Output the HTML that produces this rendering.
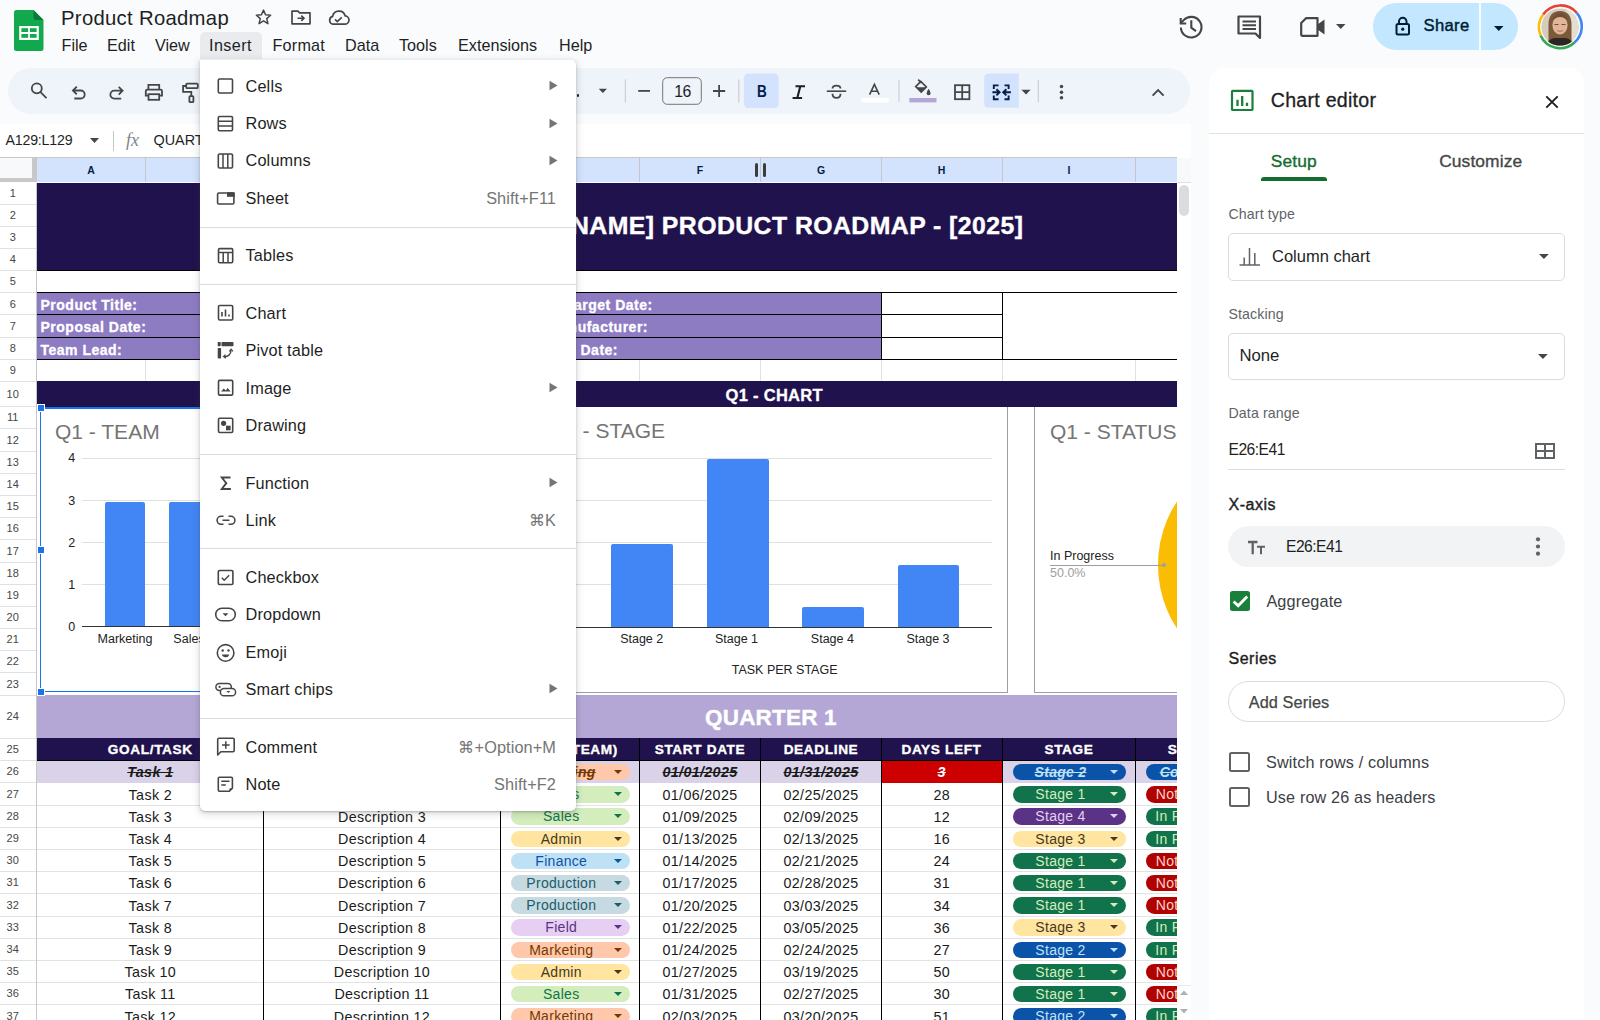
<!DOCTYPE html>
<html><head><meta charset="utf-8">
<style>
*{box-sizing:border-box}
html,body{margin:0;padding:0}
body{width:1600px;height:1020px;overflow:hidden;background:#f9fbfd;position:relative;font-family:"Liberation Sans",sans-serif;color:#1f1f1f}
.a{position:absolute}
.t{position:absolute;white-space:nowrap;line-height:1}
svg{position:absolute;overflow:visible}
/* grid */
.rh{position:absolute;left:0;width:37px;text-align:center;font-size:12px;color:#444746;background:#fff;border-bottom:1px solid #e1e1e1}
.rhn{position:absolute;left:0;width:37px;text-align:center;}
.hl{position:absolute;height:1px;background:#e2e2e2}
.vl{position:absolute;width:1px;background:#e2e2e2}
.mono{font-family:"Liberation Sans",sans-serif}
.chip{position:absolute;height:16.5px;border-radius:8.5px;font-size:14px;line-height:17px;letter-spacing:0.3px;text-align:center}
.chip i{position:absolute;right:8px;top:6px;width:0;height:0;border-left:4.2px solid transparent;border-right:4.2px solid transparent;border-top:4.5px solid currentColor}
.chip span{position:absolute;left:0;right:18px;top:0;text-align:center}
.cell{position:absolute;text-align:center;font-size:14px;letter-spacing:0.3px;color:#1a1a1a;line-height:22px}
.menu .it{position:absolute;left:245px;font-size:16.3px;color:#1f1f1f;line-height:1}
.menu .sc{position:absolute;right:23px;font-size:16px;color:#757575;line-height:1}
.menu .ar{position:absolute;left:547px;width:0;height:0;border-top:5px solid transparent;border-bottom:5px solid transparent;border-left:9px solid #5f6368}
.menu .sep{position:absolute;left:200px;width:377px;height:1px;background:#dadce0}
.menu svg{stroke:#444746;fill:none;stroke-width:1.6}
</style></head>
<body>

<!-- ============ HEADER ============ -->
<svg style="left:14px;top:10px" width="30" height="41" viewBox="0 0 30 41">
  <path d="M2 0H19.5L29.5 10V38.5Q29.5 41 27 41H2.5Q0 41 0 38.5V2.5Q0 0 2 0Z" fill="#11a84e"/>
  <path d="M19.5 0V8Q19.5 10 21.5 10H29.5Z" fill="#0a7a3a"/>
  <rect x="5.2" y="16" width="19.6" height="14" fill="#fff"/>
  <rect x="7.4" y="18.2" width="6.7" height="3.8" fill="#11a84e"/>
  <rect x="15.9" y="18.2" width="6.7" height="3.8" fill="#11a84e"/>
  <rect x="7.4" y="24" width="6.7" height="3.8" fill="#11a84e"/>
  <rect x="15.9" y="24" width="6.7" height="3.8" fill="#11a84e"/>
</svg>
<div class="t" style="left:61px;top:8px;font-size:20.3px;color:#1f1f1f;letter-spacing:0.3px">Product Roadmap</div>
<!-- star -->
<svg style="left:254px;top:8px" width="19" height="18" viewBox="0 0 24 24"><path d="M12 2.8l2.7 6.3 6.8.6-5.2 4.5 1.6 6.7L12 17.3l-5.9 3.6 1.6-6.7-5.2-4.5 6.8-.6z" fill="none" stroke="#444746" stroke-width="2" stroke-linejoin="round"/></svg>
<!-- folder move -->
<svg style="left:291px;top:10px" width="20" height="15" viewBox="0 0 20 15"><path d="M1 1.2h6l1.6 1.6H19v11H1z" fill="none" stroke="#444746" stroke-width="1.7" stroke-linejoin="round"/><path d="M6.5 8.2h6.5M10.3 5.6l2.7 2.6-2.7 2.6" fill="none" stroke="#444746" stroke-width="1.6"/></svg>
<!-- cloud done -->
<svg style="left:327px;top:11px" width="23" height="14" viewBox="0 0 23 14"><path d="M6 13.2H17.5a4.2 4.2 0 0 0 .6-8.4A6.4 6.4 0 0 0 5.6 5.4 4 4 0 0 0 6 13.2z" fill="none" stroke="#444746" stroke-width="1.7"/><path d="M8 8.4l2.3 2.2 4.4-4.2" fill="none" stroke="#444746" stroke-width="1.6"/></svg>

<!-- menu bar -->
<div class="a" style="left:200px;top:31.7px;width:62px;height:27px;background:#e9ebee;border-radius:5px 5px 0 0"></div>
<div class="t" style="left:61.5px;top:37px;font-size:16.2px;color:#1f1f1f">File</div>
<div class="t" style="left:107px;top:37px;font-size:16.2px;color:#1f1f1f">Edit</div>
<div class="t" style="left:155px;top:37px;font-size:16.2px;color:#1f1f1f">View</div>
<div class="t" style="left:209px;top:37px;font-size:16.2px;color:#1f1f1f;letter-spacing:0.4px">Insert</div>
<div class="t" style="left:272.5px;top:37px;font-size:16.2px;color:#1f1f1f;letter-spacing:0.2px">Format</div>
<div class="t" style="left:345px;top:37px;font-size:16.2px;color:#1f1f1f">Data</div>
<div class="t" style="left:399px;top:37px;font-size:16.2px;color:#1f1f1f">Tools</div>
<div class="t" style="left:458px;top:37px;font-size:16.2px;color:#1f1f1f">Extensions</div>
<div class="t" style="left:559px;top:37px;font-size:16.2px;color:#1f1f1f">Help</div>

<!-- right header icons -->
<svg style="left:1174px;top:10px" width="34" height="34" viewBox="0 0 34 34"><path d="M6.9 17.4A10.3 10.3 0 1 0 9.7 10.1L7.2 12.8" fill="none" stroke="#444746" stroke-width="2.1"/><path d="M6.7 8.1V13.5H12.2" fill="none" stroke="#444746" stroke-width="2.1"/><path d="M17.3 10.2V17.6L22 21.1" fill="none" stroke="#444746" stroke-width="2.1"/></svg>
<svg style="left:1237px;top:15px" width="25" height="25" viewBox="0 0 25 25"><path d="M1.5 1.5h21.5v21.5l-4.5-4.5H1.5z" fill="none" stroke="#444746" stroke-width="2.2" stroke-linejoin="round"/><path d="M5.5 6.5h13.5M5.5 10.3h13.5M5.5 14h13.5" stroke="#444746" stroke-width="2"/></svg>
<svg style="left:1300px;top:17px" width="26" height="20" viewBox="0 0 26 20"><path d="M6 1.2H17.5V18.8H2.5Q1.2 18.8 1.2 17.5V6z" fill="none" stroke="#444746" stroke-width="2.2" stroke-linejoin="round"/><path d="M17.5 7.5L24.5 2.5V17.5L17.5 12.5z" fill="#444746"/></svg>
<svg style="left:1336px;top:24px" width="10" height="6" viewBox="0 0 10 6"><path d="M0 0h9.5L4.75 5z" fill="#444746"/></svg>
<!-- share -->
<div class="a" style="left:1372.5px;top:3px;width:145.5px;height:47px;border-radius:24px;background:#c2e7ff"></div>
<div class="a" style="left:1478.5px;top:3px;width:2px;height:47px;background:#f9fbfd"></div>
<svg style="left:1395px;top:16px" width="16" height="20" viewBox="0 0 16 20"><rect x="1.5" y="8" width="12.5" height="10.5" rx="1.5" fill="none" stroke="#001d35" stroke-width="2"/><path d="M4 8V5.5a3.75 3.75 0 0 1 7.5 0V8" fill="none" stroke="#001d35" stroke-width="2"/><circle cx="7.75" cy="13.2" r="1.6" fill="#001d35"/></svg>
<div class="t" style="left:1423.5px;top:18.3px;font-size:16.6px;color:#001d35;-webkit-text-stroke:0.45px #001d35;letter-spacing:0.35px">Share</div>
<svg style="left:1493.5px;top:25.5px" width="10" height="6" viewBox="0 0 10 6"><path d="M0 0h9.5L4.75 5z" fill="#001d35"/></svg>
<!-- avatar -->
<svg style="left:1536px;top:3px" width="48" height="48" viewBox="0 0 48 48">
  <path d="M7.2 11.5A21.3 21.3 0 0 1 40.8 9.8" fill="none" stroke="#ea4335" stroke-width="2.6"/>
  <path d="M40.8 9.8A21.3 21.3 0 0 1 38.5 39.5" fill="none" stroke="#4285f4" stroke-width="2.6"/>
  <path d="M38.5 39.5A21.3 21.3 0 0 1 4.6 32.5" fill="none" stroke="#34a853" stroke-width="2.6"/>
  <path d="M4.6 32.5A21.3 21.3 0 0 1 7.2 11.5" fill="none" stroke="#fbbc04" stroke-width="2.6"/>
  <clipPath id="avc"><circle cx="24" cy="24" r="18.6"/></clipPath>
  <g clip-path="url(#avc)">
   <rect x="0" y="0" width="48" height="48" fill="#d6cbbd"/>
   <rect x="30" y="0" width="18" height="48" fill="#e4ddd2"/>
   <path d="M12.5 44V22Q12.5 8 24 8Q35.5 8 35.5 22V44z" fill="#7b5a3a"/>
   <path d="M8 48Q10 37 18 35H30Q38 37 40 48z" fill="#2b2624"/>
   <ellipse cx="24" cy="22" rx="7.6" ry="9.5" fill="#e2b49a"/>
   <path d="M16.5 18Q18 10 24 10Q30 10 31.5 18Q28 14 24 14Q20 14 16.5 18z" fill="#6e4f33"/>
   <path d="M18.5 21.5h4M25.5 21.5h4" stroke="#5a4536" stroke-width="0.9"/>
   <path d="M21 27.5Q24 29.5 27 27.5" fill="none" stroke="#b06a5a" stroke-width="0.9"/>
  </g>
</svg>

<!-- ============ TOOLBAR ============ -->
<div class="a" style="left:8px;top:68px;width:1182px;height:46px;border-radius:23px;background:#eff3fa"></div>
<svg style="left:0;top:0" width="1600" height="130" viewBox="0 0 1600 130">
<g fill="none" stroke="#444746" stroke-width="1.8">
<circle cx="36.8" cy="88.3" r="5"/><path d="M40.5 92.2L46.5 98.2"/>
<path d="M73.5 90.5H80.7a4 4 0 0 1 0 8H74.3M76.8 86.6L72.9 90.5 76.8 94.4"/>
<path d="M122 90.7H114.3a3.95 3.95 0 0 0 0 7.9H121.2M118.7 86.8L122.6 90.7 118.7 94.6"/>
<path d="M148.4 89.2V84.9H159.2V89.2M148.4 95.6H145.8V91.2Q145.8 89.7 147.3 89.7H160.5Q162 89.7 162 91.2V95.6H159.3"/>
<rect x="148.5" y="94.2" width="10.7" height="5.6"/>
<rect x="186.2" y="83.6" width="11.6" height="4.6" rx="1"/>
<path d="M186 86H183.1V91.8H191.3V96.3"/><rect x="189.4" y="96.2" width="4" height="6" rx="0.8"/>
</g>
<path d="M598.7 88.7H607L602.85 93z" fill="#444746"/>
<rect x="624.8" y="79.4" width="1" height="23.2" fill="#c7c7c7"/>
<path d="M638.2 90.9H650" stroke="#444746" stroke-width="1.8"/>
<rect x="662.7" y="77.7" width="38.6" height="26.6" rx="4.5" fill="none" stroke="#747775" stroke-width="1"/>
<path d="M713 91H725.2M719.1 85V97" stroke="#444746" stroke-width="1.8"/>
<rect x="738.3" y="79.4" width="1" height="23.2" fill="#c7c7c7"/>
<rect x="743.9" y="73.6" width="34.9" height="34.5" rx="4.5" fill="#d3e3fd"/>
<path d="M795.5 86.2H805M792.6 98H802.1M800.3 86.2L797.3 98" stroke="#1f1f1f" stroke-width="2.1" fill="none"/>
<path d="M826.8 91.2H846.2" stroke="#444746" stroke-width="1.6"/>
<path d="M840.5 88.6Q840.5 85.6 836.5 85.6Q832.5 85.6 832.5 88.6M832.5 93.8Q832.5 97.9 836.5 97.9Q840.5 97.9 840.5 93.8" fill="none" stroke="#444746" stroke-width="1.8"/>
<path d="M869.6 94.6L874.4 84.3L879.2 94.6M871.2 91.2H877.6" fill="none" stroke="#444746" stroke-width="1.6"/>
<rect x="861.6" y="98" width="27.1" height="4.4" fill="#ffffff"/>
<rect x="898.5" y="80" width="1" height="22" fill="#c7c7c7"/>
<path d="M915.7 86.6L920.8 81.5L926.3 87L921.2 92.1z" fill="none" stroke="#444746" stroke-width="1.7"/>
<path d="M916 87.2H926.1L921.2 92.1z" fill="#444746"/>
<path d="M918.2 79.6L921.5 82.9" stroke="#444746" stroke-width="1.7"/>
<path d="M928.6 88.8Q926.4 92 926.6 93.2A2 2 0 0 0 930.6 93.2Q930.8 92 928.6 88.8z" fill="#444746"/>
<rect x="909.3" y="98" width="27.2" height="4.4" fill="#b4a7d6"/>
<rect x="955" y="85.2" width="14.4" height="14" fill="none" stroke="#444746" stroke-width="1.8"/>
<path d="M962.2 85.2V99.2M955 92.2H969.4" stroke="#444746" stroke-width="1.8"/>
<path d="M988.6 73.4H1018.9V107.8H988.6Q984.1 107.8 984.1 103.3V77.9Q984.1 73.4 988.6 73.4z" fill="#d3e3fd"/>
<g fill="none" stroke="#041e49" stroke-width="1.9">
<path d="M998.6 85.4H993.8V89M993.8 95.4V99.3H998.6M1004.5 85.4H1008.6V89M1008.6 95.4V99.3H1004.5"/>
<path d="M992.4 92.3H999.5M996.4 89.2L999.6 92.3 996.4 95.4M1010.9 92.3H1003.2M1006.4 89.2L1003.2 92.3 1006.4 95.4"/>
</g>
<path d="M1021.4 89.8H1030.6L1026 94.5z" fill="#444746"/>
<rect x="1037.8" y="79.7" width="1" height="22.5" fill="#c7c7c7"/>
<circle cx="1061.5" cy="86.6" r="1.75" fill="#444746"/><circle cx="1061.5" cy="92.2" r="1.75" fill="#444746"/><circle cx="1061.5" cy="97.8" r="1.75" fill="#444746"/>
<path d="M1152.6 95.6L1158.1 90 1163.6 95.6" fill="none" stroke="#444746" stroke-width="1.8"/>
</svg>
<div class="t" style="left:674.3px;top:83.6px;font-size:15.8px;color:#1f1f1f;letter-spacing:-0.6px">16</div>
<div class="t" style="left:756.6px;top:82.5px;font-size:17.4px;color:#041e49;font-weight:bold;transform:scaleX(0.78);transform-origin:0 0">B</div>
<div class="a" style="left:576.5px;top:94px;width:2.6px;height:2.6px;border-radius:50%;background:#1f1f1f"></div>

<!-- ============ FORMULA BAR ============ -->
<div class="a" style="left:0;top:124px;width:1190.5px;height:33.5px;background:#fff"></div>
<div class="t" style="left:5.5px;top:132.8px;font-size:14.2px;color:#1f1f1f;letter-spacing:-0.2px">A129:L129</div>
<svg style="left:89.5px;top:137.5px" width="10" height="6" viewBox="0 0 10 6"><path d="M0 0h9L4.5 5z" fill="#444746"/></svg>
<div class="a" style="left:113px;top:131px;width:1px;height:19.5px;background:#c7c7c7"></div>
<div class="t" style="left:126px;top:131px;font-size:18px;color:#80868b;font-family:'Liberation Serif',serif;font-style:italic">fx</div>
<div class="t" style="left:153.5px;top:132.5px;font-size:14.4px;color:#1f1f1f">QUART</div>

<div class="a" style="left:0;top:0;width:1177px;height:1020px;overflow:hidden">
<div class="a" style="left:37px;top:182.5px;width:1140px;height:840px;background:#fff"></div>
<div class="a" style="left:0;top:182.5px;width:37px;height:840px;background:#fff"></div>
<div class="a" style="left:0;top:204px;width:37px;height:1px;background:#dfe1e3"></div>
<div class="t" style="left:0;width:25.4px;text-align:center;top:188.14px;font-size:11px;color:#444746">1</div>
<div class="a" style="left:0;top:226px;width:37px;height:1px;background:#dfe1e3"></div>
<div class="t" style="left:0;width:25.4px;text-align:center;top:210.22px;font-size:11px;color:#444746">2</div>
<div class="a" style="left:0;top:248px;width:37px;height:1px;background:#dfe1e3"></div>
<div class="t" style="left:0;width:25.4px;text-align:center;top:232.3px;font-size:11px;color:#444746">3</div>
<div class="a" style="left:0;top:270px;width:37px;height:1px;background:#dfe1e3"></div>
<div class="t" style="left:0;width:25.4px;text-align:center;top:254.38px;font-size:11px;color:#444746">4</div>
<div class="a" style="left:0;top:292px;width:37px;height:1px;background:#dfe1e3"></div>
<div class="t" style="left:0;width:25.4px;text-align:center;top:276.46px;font-size:11px;color:#444746">5</div>
<div class="a" style="left:0;top:314px;width:37px;height:1px;background:#dfe1e3"></div>
<div class="t" style="left:0;width:25.4px;text-align:center;top:298.54px;font-size:11px;color:#444746">6</div>
<div class="a" style="left:0;top:337px;width:37px;height:1px;background:#dfe1e3"></div>
<div class="t" style="left:0;width:25.4px;text-align:center;top:320.62px;font-size:11px;color:#444746">7</div>
<div class="a" style="left:0;top:359px;width:37px;height:1px;background:#dfe1e3"></div>
<div class="t" style="left:0;width:25.4px;text-align:center;top:342.7px;font-size:11px;color:#444746">8</div>
<div class="a" style="left:0;top:381px;width:37px;height:1px;background:#dfe1e3"></div>
<div class="t" style="left:0;width:25.4px;text-align:center;top:364.77px;font-size:11px;color:#444746">9</div>
<div class="a" style="left:0;top:406px;width:37px;height:1px;background:#dfe1e3"></div>
<div class="t" style="left:0;width:25.4px;text-align:center;top:388.6px;font-size:11px;color:#444746">10</div>
<div class="a" style="left:0;top:428px;width:37px;height:1px;background:#dfe1e3"></div>
<div class="t" style="left:0;width:25.4px;text-align:center;top:412.49px;font-size:11px;color:#444746">11</div>
<div class="a" style="left:0;top:451px;width:37px;height:1px;background:#dfe1e3"></div>
<div class="t" style="left:0;width:25.4px;text-align:center;top:434.67px;font-size:11px;color:#444746">12</div>
<div class="a" style="left:0;top:473px;width:37px;height:1px;background:#dfe1e3"></div>
<div class="t" style="left:0;width:25.4px;text-align:center;top:456.85px;font-size:11px;color:#444746">13</div>
<div class="a" style="left:0;top:495px;width:37px;height:1px;background:#dfe1e3"></div>
<div class="t" style="left:0;width:25.4px;text-align:center;top:479.03px;font-size:11px;color:#444746">14</div>
<div class="a" style="left:0;top:517px;width:37px;height:1px;background:#dfe1e3"></div>
<div class="t" style="left:0;width:25.4px;text-align:center;top:501.21px;font-size:11px;color:#444746">15</div>
<div class="a" style="left:0;top:539px;width:37px;height:1px;background:#dfe1e3"></div>
<div class="t" style="left:0;width:25.4px;text-align:center;top:523.39px;font-size:11px;color:#444746">16</div>
<div class="a" style="left:0;top:562px;width:37px;height:1px;background:#dfe1e3"></div>
<div class="t" style="left:0;width:25.4px;text-align:center;top:545.57px;font-size:11px;color:#444746">17</div>
<div class="a" style="left:0;top:584px;width:37px;height:1px;background:#dfe1e3"></div>
<div class="t" style="left:0;width:25.4px;text-align:center;top:567.75px;font-size:11px;color:#444746">18</div>
<div class="a" style="left:0;top:606px;width:37px;height:1px;background:#dfe1e3"></div>
<div class="t" style="left:0;width:25.4px;text-align:center;top:589.93px;font-size:11px;color:#444746">19</div>
<div class="a" style="left:0;top:628px;width:37px;height:1px;background:#dfe1e3"></div>
<div class="t" style="left:0;width:25.4px;text-align:center;top:612.11px;font-size:11px;color:#444746">20</div>
<div class="a" style="left:0;top:650px;width:37px;height:1px;background:#dfe1e3"></div>
<div class="t" style="left:0;width:25.4px;text-align:center;top:634.29px;font-size:11px;color:#444746">21</div>
<div class="a" style="left:0;top:672px;width:37px;height:1px;background:#dfe1e3"></div>
<div class="t" style="left:0;width:25.4px;text-align:center;top:656.47px;font-size:11px;color:#444746">22</div>
<div class="a" style="left:0;top:695px;width:37px;height:1px;background:#dfe1e3"></div>
<div class="t" style="left:0;width:25.4px;text-align:center;top:678.63px;font-size:11px;color:#444746">23</div>
<div class="a" style="left:0;top:738px;width:37px;height:1px;background:#dfe1e3"></div>
<div class="t" style="left:0;width:25.4px;text-align:center;top:711.25px;font-size:11px;color:#444746">24</div>
<div class="a" style="left:0;top:760px;width:37px;height:1px;background:#dfe1e3"></div>
<div class="t" style="left:0;width:25.4px;text-align:center;top:744px;font-size:11px;color:#444746">25</div>
<div class="a" style="left:0;top:782px;width:37px;height:1px;background:#dfe1e3"></div>
<div class="t" style="left:0;width:25.4px;text-align:center;top:766.3px;font-size:11px;color:#444746">26</div>
<div class="a" style="left:0;top:805px;width:37px;height:1px;background:#dfe1e3"></div>
<div class="t" style="left:0;width:25.4px;text-align:center;top:788.5px;font-size:11px;color:#444746">27</div>
<div class="a" style="left:0;top:827px;width:37px;height:1px;background:#dfe1e3"></div>
<div class="t" style="left:0;width:25.4px;text-align:center;top:810.7px;font-size:11px;color:#444746">28</div>
<div class="a" style="left:0;top:849px;width:37px;height:1px;background:#dfe1e3"></div>
<div class="t" style="left:0;width:25.4px;text-align:center;top:832.9px;font-size:11px;color:#444746">29</div>
<div class="a" style="left:0;top:871px;width:37px;height:1px;background:#dfe1e3"></div>
<div class="t" style="left:0;width:25.4px;text-align:center;top:855.1px;font-size:11px;color:#444746">30</div>
<div class="a" style="left:0;top:893px;width:37px;height:1px;background:#dfe1e3"></div>
<div class="t" style="left:0;width:25.4px;text-align:center;top:877.3px;font-size:11px;color:#444746">31</div>
<div class="a" style="left:0;top:916px;width:37px;height:1px;background:#dfe1e3"></div>
<div class="t" style="left:0;width:25.4px;text-align:center;top:899.5px;font-size:11px;color:#444746">32</div>
<div class="a" style="left:0;top:938px;width:37px;height:1px;background:#dfe1e3"></div>
<div class="t" style="left:0;width:25.4px;text-align:center;top:921.7px;font-size:11px;color:#444746">33</div>
<div class="a" style="left:0;top:960px;width:37px;height:1px;background:#dfe1e3"></div>
<div class="t" style="left:0;width:25.4px;text-align:center;top:943.9px;font-size:11px;color:#444746">34</div>
<div class="a" style="left:0;top:982px;width:37px;height:1px;background:#dfe1e3"></div>
<div class="t" style="left:0;width:25.4px;text-align:center;top:966.1px;font-size:11px;color:#444746">35</div>
<div class="a" style="left:0;top:1004px;width:37px;height:1px;background:#dfe1e3"></div>
<div class="t" style="left:0;width:25.4px;text-align:center;top:988.3px;font-size:11px;color:#444746">36</div>
<div class="a" style="left:0;top:1027px;width:37px;height:1px;background:#dfe1e3"></div>
<div class="t" style="left:0;width:25.4px;text-align:center;top:1010.5px;font-size:11px;color:#444746">37</div>
<div class="a" style="left:36px;top:182.5px;width:1px;height:840px;background:#c7c7c7"></div>
<div class="a" style="left:145px;top:359.14px;width:1px;height:22.06px;background:#e2e2e2"></div>
<div class="a" style="left:263px;top:359.14px;width:1px;height:22.06px;background:#e2e2e2"></div>
<div class="a" style="left:381px;top:359.14px;width:1px;height:22.06px;background:#e2e2e2"></div>
<div class="a" style="left:500px;top:359.14px;width:1px;height:22.06px;background:#e2e2e2"></div>
<div class="a" style="left:639px;top:359.14px;width:1px;height:22.06px;background:#e2e2e2"></div>
<div class="a" style="left:760px;top:359.14px;width:1px;height:22.06px;background:#e2e2e2"></div>
<div class="a" style="left:881px;top:359.14px;width:1px;height:22.06px;background:#e2e2e2"></div>
<div class="a" style="left:1002px;top:359.14px;width:1px;height:22.06px;background:#e2e2e2"></div>
<div class="a" style="left:1135px;top:359.14px;width:1px;height:22.06px;background:#e2e2e2"></div>
<div class="a" style="left:37px;top:270px;width:1140px;height:1px;background:#e2e2e2"></div>
<div class="a" style="left:37px;top:381px;width:1140px;height:1px;background:#e2e2e2"></div>
<div class="a" style="left:37px;top:182.5px;width:1140px;height:88.32px;background:#20124d"></div>
<div class="a" style="left:37px;top:269.8px;width:1140px;height:1.2px;background:#000"></div>
<div class="t" style="left:423.5px;width:600px;text-align:right;top:214px;font-size:24.8px;color:#fff;font-weight:bold;letter-spacing:0.45px;-webkit-text-stroke:0.4px #fff">[COMPANY NAME] PRODUCT ROADMAP - [2025]</div>
<div class="a" style="left:37px;top:292.9px;width:844.4px;height:66.24px;background:#8e7cc3"></div>
<div class="a" style="left:37px;top:292px;width:1140px;height:1px;background:#000"></div>
<div class="a" style="left:37px;top:314px;width:965.5px;height:1px;background:#000"></div>
<div class="a" style="left:37px;top:337px;width:965.5px;height:1px;background:#000"></div>
<div class="a" style="left:37px;top:359px;width:1140px;height:1px;background:#000"></div>
<div class="a" style="left:881px;top:292.9px;width:1px;height:66.24px;background:#000"></div>
<div class="a" style="left:1002px;top:292.9px;width:1px;height:66.24px;background:#000"></div>
<div class="t" style="left:40.5px;top:298.4px;font-size:14px;color:#fff;font-weight:bold;letter-spacing:0.5px;-webkit-text-stroke:0.3px #fff">Product Title:</div>
<div class="t" style="left:40.5px;top:320.48px;font-size:14px;color:#fff;font-weight:bold;letter-spacing:0.5px;-webkit-text-stroke:0.3px #fff">Proposal Date:</div>
<div class="t" style="left:40.5px;top:342.56px;font-size:14px;color:#fff;font-weight:bold;letter-spacing:0.5px;-webkit-text-stroke:0.3px #fff">Team Lead:</div>
<div class="t" style="left:52.7px;width:600px;text-align:right;top:298.4px;font-size:14px;color:#fff;font-weight:bold;letter-spacing:0.5px;-webkit-text-stroke:0.3px #fff">Target Date:</div>
<div class="t" style="left:48px;width:600px;text-align:right;top:320.48px;font-size:14px;color:#fff;font-weight:bold;letter-spacing:0.5px;-webkit-text-stroke:0.3px #fff">Manufacturer:</div>
<div class="t" style="left:18px;width:600px;text-align:right;top:342.56px;font-size:14px;color:#fff;font-weight:bold;letter-spacing:0.5px;-webkit-text-stroke:0.3px #fff">Launch Date:</div>
<div class="a" style="left:37px;top:381.2px;width:1140px;height:25.6px;background:#20124d"></div>
<div class="t" style="left:725.5px;top:387.2px;font-size:16.5px;color:#fff;font-weight:bold;letter-spacing:0.3px;-webkit-text-stroke:0.3px #fff">Q1 - CHART</div>
<div class="a" style="left:37px;top:695.1px;width:1140px;height:43.1px;background:#b4a7d6"></div>
<div class="t" style="left:705px;top:707.1px;font-size:22.5px;color:#fff;font-weight:bold;letter-spacing:0.2px;-webkit-text-stroke:0.4px #fff">QUARTER 1</div>
<div class="a" style="left:37px;top:738.2px;width:1140px;height:22.4px;background:#20124d"></div>
<div class="a" style="left:37px;top:759.85px;width:1140px;height:1.5px;background:#000"></div>
<div class="t" style="left:-149.7px;width:600px;text-align:center;top:743.4px;font-size:13.6px;color:#fff;font-weight:bold;letter-spacing:0.65px;-webkit-text-stroke:0.35px #fff">GOAL/TASK</div>
<div class="t" style="left:82px;width:600px;text-align:center;top:743.4px;font-size:13.6px;color:#fff;font-weight:bold;letter-spacing:0.65px;-webkit-text-stroke:0.35px #fff">DESCRIPTION</div>
<div class="t" style="left:400px;width:600px;text-align:center;top:743.4px;font-size:13.6px;color:#fff;font-weight:bold;letter-spacing:0.65px;-webkit-text-stroke:0.35px #fff">START DATE</div>
<div class="t" style="left:521px;width:600px;text-align:center;top:743.4px;font-size:13.6px;color:#fff;font-weight:bold;letter-spacing:0.65px;-webkit-text-stroke:0.35px #fff">DEADLINE</div>
<div class="t" style="left:641.5px;width:600px;text-align:center;top:743.4px;font-size:13.6px;color:#fff;font-weight:bold;letter-spacing:0.65px;-webkit-text-stroke:0.35px #fff">DAYS LEFT</div>
<div class="t" style="left:769px;width:600px;text-align:center;top:743.4px;font-size:13.6px;color:#fff;font-weight:bold;letter-spacing:0.65px;-webkit-text-stroke:0.35px #fff">STAGE</div>
<div class="t" style="left:896px;width:600px;text-align:center;top:743.4px;font-size:13.6px;color:#fff;font-weight:bold;letter-spacing:0.65px;-webkit-text-stroke:0.35px #fff">STATUS</div>
<div class="t" style="left:18px;width:600px;text-align:right;top:743.4px;font-size:13.6px;color:#fff;font-weight:bold;letter-spacing:0.65px;-webkit-text-stroke:0.35px #fff">DEPARTMENT (TEAM)</div>
<div class="a" style="left:37px;top:760.6px;width:1140px;height:22.2px;background:#d9d2e9"></div>
<div class="a" style="left:881.4px;top:760.6px;width:121.1px;height:22.2px;background:#cc0000"></div>
<div class="t" style="left:-149.7px;width:600px;text-align:center;top:765.4px;font-size:14.3px;color:#1a1a1a;font-weight:bold;font-style:italic;text-decoration:line-through;letter-spacing:0.35px">Task 1</div>
<div class="t" style="left:82px;width:600px;text-align:center;top:765.4px;font-size:14.3px;color:#1a1a1a;font-weight:bold;font-style:italic;text-decoration:line-through;letter-spacing:0.35px">Description 1</div>
<div class="chip" style="left:510.5px;top:763.9px;width:119.5px;background:#ffc8aa;color:#753800"><span style="font-weight:bold;font-style:italic;text-decoration:line-through;">Marketing</span><i></i></div>
<div class="t" style="left:400px;width:600px;text-align:center;top:765.4px;font-size:14.3px;color:#1a1a1a;font-weight:bold;font-style:italic;text-decoration:line-through;letter-spacing:0.35px">01/01/2025</div>
<div class="t" style="left:521px;width:600px;text-align:center;top:765.4px;font-size:14.3px;color:#1a1a1a;font-weight:bold;font-style:italic;text-decoration:line-through;letter-spacing:0.35px">01/31/2025</div>
<div class="t" style="left:641.7px;width:600px;text-align:center;top:765.4px;font-size:14.3px;color:#fff;font-weight:bold;font-style:italic;text-decoration:line-through;letter-spacing:0.35px">3</div>
<div class="chip" style="left:1013px;top:763.9px;width:113px;background:#0a53a8;color:#bfe1f6"><span style="font-weight:bold;font-style:italic;text-decoration:line-through;">Stage 2</span><i></i></div>
<div class="chip" style="left:1145.6px;top:763.9px;width:112.4px;background:#0a53a8;color:#bfe1f6"><span style="font-weight:bold;font-style:italic;text-decoration:line-through;">Complete</span><i></i></div>
<div class="a" style="left:37px;top:805px;width:1140px;height:1px;background:#e2e2e2"></div>
<div class="t" style="left:-149.7px;width:600px;text-align:center;top:787.6px;font-size:14.3px;color:#1a1a1a;letter-spacing:0.35px">Task 2</div>
<div class="t" style="left:82px;width:600px;text-align:center;top:787.6px;font-size:14.3px;color:#1a1a1a;letter-spacing:0.35px">Description 2</div>
<div class="chip" style="left:510.5px;top:786.1px;width:119.5px;background:#d4edbc;color:#11734b"><span style="">Sales</span><i></i></div>
<div class="t" style="left:400px;width:600px;text-align:center;top:787.6px;font-size:14.3px;color:#1a1a1a;letter-spacing:0.35px">01/06/2025</div>
<div class="t" style="left:521px;width:600px;text-align:center;top:787.6px;font-size:14.3px;color:#1a1a1a;letter-spacing:0.35px">02/25/2025</div>
<div class="t" style="left:641.7px;width:600px;text-align:center;top:787.6px;font-size:14.3px;color:#1a1a1a;letter-spacing:0.35px">28</div>
<div class="chip" style="left:1013px;top:786.1px;width:113px;background:#11734b;color:#d4edbc"><span style="">Stage 1</span><i></i></div>
<div class="chip" style="left:1145.6px;top:786.1px;width:112.4px;background:#b10202;color:#ffcfc9"><span style="">Not Started</span><i></i></div>
<div class="a" style="left:37px;top:827px;width:1140px;height:1px;background:#e2e2e2"></div>
<div class="t" style="left:-149.7px;width:600px;text-align:center;top:809.8px;font-size:14.3px;color:#1a1a1a;letter-spacing:0.35px">Task 3</div>
<div class="t" style="left:82px;width:600px;text-align:center;top:809.8px;font-size:14.3px;color:#1a1a1a;letter-spacing:0.35px">Description 3</div>
<div class="chip" style="left:510.5px;top:808.3px;width:119.5px;background:#d4edbc;color:#11734b"><span style="">Sales</span><i></i></div>
<div class="t" style="left:400px;width:600px;text-align:center;top:809.8px;font-size:14.3px;color:#1a1a1a;letter-spacing:0.35px">01/09/2025</div>
<div class="t" style="left:521px;width:600px;text-align:center;top:809.8px;font-size:14.3px;color:#1a1a1a;letter-spacing:0.35px">02/09/2025</div>
<div class="t" style="left:641.7px;width:600px;text-align:center;top:809.8px;font-size:14.3px;color:#1a1a1a;letter-spacing:0.35px">12</div>
<div class="chip" style="left:1013px;top:808.3px;width:113px;background:#5a3286;color:#e6cff2"><span style="">Stage 4</span><i></i></div>
<div class="chip" style="left:1145.6px;top:808.3px;width:112.4px;background:#11734b;color:#d4edbc"><span style="">In Progress</span><i></i></div>
<div class="a" style="left:37px;top:849px;width:1140px;height:1px;background:#e2e2e2"></div>
<div class="t" style="left:-149.7px;width:600px;text-align:center;top:832px;font-size:14.3px;color:#1a1a1a;letter-spacing:0.35px">Task 4</div>
<div class="t" style="left:82px;width:600px;text-align:center;top:832px;font-size:14.3px;color:#1a1a1a;letter-spacing:0.35px">Description 4</div>
<div class="chip" style="left:510.5px;top:830.5px;width:119.5px;background:#ffe5a0;color:#473821"><span style="">Admin</span><i></i></div>
<div class="t" style="left:400px;width:600px;text-align:center;top:832px;font-size:14.3px;color:#1a1a1a;letter-spacing:0.35px">01/13/2025</div>
<div class="t" style="left:521px;width:600px;text-align:center;top:832px;font-size:14.3px;color:#1a1a1a;letter-spacing:0.35px">02/13/2025</div>
<div class="t" style="left:641.7px;width:600px;text-align:center;top:832px;font-size:14.3px;color:#1a1a1a;letter-spacing:0.35px">16</div>
<div class="chip" style="left:1013px;top:830.5px;width:113px;background:#ffe5a0;color:#473821"><span style="">Stage 3</span><i></i></div>
<div class="chip" style="left:1145.6px;top:830.5px;width:112.4px;background:#11734b;color:#d4edbc"><span style="">In Progress</span><i></i></div>
<div class="a" style="left:37px;top:871px;width:1140px;height:1px;background:#e2e2e2"></div>
<div class="t" style="left:-149.7px;width:600px;text-align:center;top:854.2px;font-size:14.3px;color:#1a1a1a;letter-spacing:0.35px">Task 5</div>
<div class="t" style="left:82px;width:600px;text-align:center;top:854.2px;font-size:14.3px;color:#1a1a1a;letter-spacing:0.35px">Description 5</div>
<div class="chip" style="left:510.5px;top:852.7px;width:119.5px;background:#bfe1f6;color:#0a53a8"><span style="">Finance</span><i></i></div>
<div class="t" style="left:400px;width:600px;text-align:center;top:854.2px;font-size:14.3px;color:#1a1a1a;letter-spacing:0.35px">01/14/2025</div>
<div class="t" style="left:521px;width:600px;text-align:center;top:854.2px;font-size:14.3px;color:#1a1a1a;letter-spacing:0.35px">02/21/2025</div>
<div class="t" style="left:641.7px;width:600px;text-align:center;top:854.2px;font-size:14.3px;color:#1a1a1a;letter-spacing:0.35px">24</div>
<div class="chip" style="left:1013px;top:852.7px;width:113px;background:#11734b;color:#d4edbc"><span style="">Stage 1</span><i></i></div>
<div class="chip" style="left:1145.6px;top:852.7px;width:112.4px;background:#b10202;color:#ffcfc9"><span style="">Not Started</span><i></i></div>
<div class="a" style="left:37px;top:893px;width:1140px;height:1px;background:#e2e2e2"></div>
<div class="t" style="left:-149.7px;width:600px;text-align:center;top:876.4px;font-size:14.3px;color:#1a1a1a;letter-spacing:0.35px">Task 6</div>
<div class="t" style="left:82px;width:600px;text-align:center;top:876.4px;font-size:14.3px;color:#1a1a1a;letter-spacing:0.35px">Description 6</div>
<div class="chip" style="left:510.5px;top:874.9px;width:119.5px;background:#c6dbe1;color:#215a6c"><span style="">Production</span><i></i></div>
<div class="t" style="left:400px;width:600px;text-align:center;top:876.4px;font-size:14.3px;color:#1a1a1a;letter-spacing:0.35px">01/17/2025</div>
<div class="t" style="left:521px;width:600px;text-align:center;top:876.4px;font-size:14.3px;color:#1a1a1a;letter-spacing:0.35px">02/28/2025</div>
<div class="t" style="left:641.7px;width:600px;text-align:center;top:876.4px;font-size:14.3px;color:#1a1a1a;letter-spacing:0.35px">31</div>
<div class="chip" style="left:1013px;top:874.9px;width:113px;background:#11734b;color:#d4edbc"><span style="">Stage 1</span><i></i></div>
<div class="chip" style="left:1145.6px;top:874.9px;width:112.4px;background:#b10202;color:#ffcfc9"><span style="">Not Started</span><i></i></div>
<div class="a" style="left:37px;top:916px;width:1140px;height:1px;background:#e2e2e2"></div>
<div class="t" style="left:-149.7px;width:600px;text-align:center;top:898.6px;font-size:14.3px;color:#1a1a1a;letter-spacing:0.35px">Task 7</div>
<div class="t" style="left:82px;width:600px;text-align:center;top:898.6px;font-size:14.3px;color:#1a1a1a;letter-spacing:0.35px">Description 7</div>
<div class="chip" style="left:510.5px;top:897.1px;width:119.5px;background:#c6dbe1;color:#215a6c"><span style="">Production</span><i></i></div>
<div class="t" style="left:400px;width:600px;text-align:center;top:898.6px;font-size:14.3px;color:#1a1a1a;letter-spacing:0.35px">01/20/2025</div>
<div class="t" style="left:521px;width:600px;text-align:center;top:898.6px;font-size:14.3px;color:#1a1a1a;letter-spacing:0.35px">03/03/2025</div>
<div class="t" style="left:641.7px;width:600px;text-align:center;top:898.6px;font-size:14.3px;color:#1a1a1a;letter-spacing:0.35px">34</div>
<div class="chip" style="left:1013px;top:897.1px;width:113px;background:#11734b;color:#d4edbc"><span style="">Stage 1</span><i></i></div>
<div class="chip" style="left:1145.6px;top:897.1px;width:112.4px;background:#b10202;color:#ffcfc9"><span style="">Not Started</span><i></i></div>
<div class="a" style="left:37px;top:938px;width:1140px;height:1px;background:#e2e2e2"></div>
<div class="t" style="left:-149.7px;width:600px;text-align:center;top:920.8px;font-size:14.3px;color:#1a1a1a;letter-spacing:0.35px">Task 8</div>
<div class="t" style="left:82px;width:600px;text-align:center;top:920.8px;font-size:14.3px;color:#1a1a1a;letter-spacing:0.35px">Description 8</div>
<div class="chip" style="left:510.5px;top:919.3px;width:119.5px;background:#e6cff2;color:#5a3286"><span style="">Field</span><i></i></div>
<div class="t" style="left:400px;width:600px;text-align:center;top:920.8px;font-size:14.3px;color:#1a1a1a;letter-spacing:0.35px">01/22/2025</div>
<div class="t" style="left:521px;width:600px;text-align:center;top:920.8px;font-size:14.3px;color:#1a1a1a;letter-spacing:0.35px">03/05/2025</div>
<div class="t" style="left:641.7px;width:600px;text-align:center;top:920.8px;font-size:14.3px;color:#1a1a1a;letter-spacing:0.35px">36</div>
<div class="chip" style="left:1013px;top:919.3px;width:113px;background:#ffe5a0;color:#473821"><span style="">Stage 3</span><i></i></div>
<div class="chip" style="left:1145.6px;top:919.3px;width:112.4px;background:#11734b;color:#d4edbc"><span style="">In Progress</span><i></i></div>
<div class="a" style="left:37px;top:960px;width:1140px;height:1px;background:#e2e2e2"></div>
<div class="t" style="left:-149.7px;width:600px;text-align:center;top:943px;font-size:14.3px;color:#1a1a1a;letter-spacing:0.35px">Task 9</div>
<div class="t" style="left:82px;width:600px;text-align:center;top:943px;font-size:14.3px;color:#1a1a1a;letter-spacing:0.35px">Description 9</div>
<div class="chip" style="left:510.5px;top:941.5px;width:119.5px;background:#ffc8aa;color:#753800"><span style="">Marketing</span><i></i></div>
<div class="t" style="left:400px;width:600px;text-align:center;top:943px;font-size:14.3px;color:#1a1a1a;letter-spacing:0.35px">01/24/2025</div>
<div class="t" style="left:521px;width:600px;text-align:center;top:943px;font-size:14.3px;color:#1a1a1a;letter-spacing:0.35px">02/24/2025</div>
<div class="t" style="left:641.7px;width:600px;text-align:center;top:943px;font-size:14.3px;color:#1a1a1a;letter-spacing:0.35px">27</div>
<div class="chip" style="left:1013px;top:941.5px;width:113px;background:#0a53a8;color:#bfe1f6"><span style="">Stage 2</span><i></i></div>
<div class="chip" style="left:1145.6px;top:941.5px;width:112.4px;background:#11734b;color:#d4edbc"><span style="">In Progress</span><i></i></div>
<div class="a" style="left:37px;top:982px;width:1140px;height:1px;background:#e2e2e2"></div>
<div class="t" style="left:-149.7px;width:600px;text-align:center;top:965.2px;font-size:14.3px;color:#1a1a1a;letter-spacing:0.35px">Task 10</div>
<div class="t" style="left:82px;width:600px;text-align:center;top:965.2px;font-size:14.3px;color:#1a1a1a;letter-spacing:0.35px">Description 10</div>
<div class="chip" style="left:510.5px;top:963.7px;width:119.5px;background:#ffe5a0;color:#473821"><span style="">Admin</span><i></i></div>
<div class="t" style="left:400px;width:600px;text-align:center;top:965.2px;font-size:14.3px;color:#1a1a1a;letter-spacing:0.35px">01/27/2025</div>
<div class="t" style="left:521px;width:600px;text-align:center;top:965.2px;font-size:14.3px;color:#1a1a1a;letter-spacing:0.35px">03/19/2025</div>
<div class="t" style="left:641.7px;width:600px;text-align:center;top:965.2px;font-size:14.3px;color:#1a1a1a;letter-spacing:0.35px">50</div>
<div class="chip" style="left:1013px;top:963.7px;width:113px;background:#11734b;color:#d4edbc"><span style="">Stage 1</span><i></i></div>
<div class="chip" style="left:1145.6px;top:963.7px;width:112.4px;background:#b10202;color:#ffcfc9"><span style="">Not Started</span><i></i></div>
<div class="a" style="left:37px;top:1004px;width:1140px;height:1px;background:#e2e2e2"></div>
<div class="t" style="left:-149.7px;width:600px;text-align:center;top:987.4px;font-size:14.3px;color:#1a1a1a;letter-spacing:0.35px">Task 11</div>
<div class="t" style="left:82px;width:600px;text-align:center;top:987.4px;font-size:14.3px;color:#1a1a1a;letter-spacing:0.35px">Description 11</div>
<div class="chip" style="left:510.5px;top:985.9px;width:119.5px;background:#d4edbc;color:#11734b"><span style="">Sales</span><i></i></div>
<div class="t" style="left:400px;width:600px;text-align:center;top:987.4px;font-size:14.3px;color:#1a1a1a;letter-spacing:0.35px">01/31/2025</div>
<div class="t" style="left:521px;width:600px;text-align:center;top:987.4px;font-size:14.3px;color:#1a1a1a;letter-spacing:0.35px">02/27/2025</div>
<div class="t" style="left:641.7px;width:600px;text-align:center;top:987.4px;font-size:14.3px;color:#1a1a1a;letter-spacing:0.35px">30</div>
<div class="chip" style="left:1013px;top:985.9px;width:113px;background:#11734b;color:#d4edbc"><span style="">Stage 1</span><i></i></div>
<div class="chip" style="left:1145.6px;top:985.9px;width:112.4px;background:#b10202;color:#ffcfc9"><span style="">Not Started</span><i></i></div>
<div class="a" style="left:37px;top:1027px;width:1140px;height:1px;background:#e2e2e2"></div>
<div class="t" style="left:-149.7px;width:600px;text-align:center;top:1009.6px;font-size:14.3px;color:#1a1a1a;letter-spacing:0.35px">Task 12</div>
<div class="t" style="left:82px;width:600px;text-align:center;top:1009.6px;font-size:14.3px;color:#1a1a1a;letter-spacing:0.35px">Description 12</div>
<div class="chip" style="left:510.5px;top:1008.1px;width:119.5px;background:#ffc8aa;color:#753800"><span style="">Marketing</span><i></i></div>
<div class="t" style="left:400px;width:600px;text-align:center;top:1009.6px;font-size:14.3px;color:#1a1a1a;letter-spacing:0.35px">02/03/2025</div>
<div class="t" style="left:521px;width:600px;text-align:center;top:1009.6px;font-size:14.3px;color:#1a1a1a;letter-spacing:0.35px">03/20/2025</div>
<div class="t" style="left:641.7px;width:600px;text-align:center;top:1009.6px;font-size:14.3px;color:#1a1a1a;letter-spacing:0.35px">51</div>
<div class="chip" style="left:1013px;top:1008.1px;width:113px;background:#0a53a8;color:#bfe1f6"><span style="">Stage 2</span><i></i></div>
<div class="chip" style="left:1145.6px;top:1008.1px;width:112.4px;background:#11734b;color:#d4edbc"><span style="">In Progress</span><i></i></div>
<div class="a" style="left:263px;top:738.2px;width:1px;height:281.8px;background:#000"></div>
<div class="a" style="left:500px;top:738.2px;width:1px;height:281.8px;background:#000"></div>
<div class="a" style="left:639px;top:738.2px;width:1px;height:281.8px;background:#000"></div>
<div class="a" style="left:760px;top:738.2px;width:1px;height:281.8px;background:#000"></div>
<div class="a" style="left:881px;top:738.2px;width:1px;height:281.8px;background:#000"></div>
<div class="a" style="left:1002px;top:738.2px;width:1px;height:281.8px;background:#000"></div>
<div class="a" style="left:1135px;top:738.2px;width:1px;height:281.8px;background:#000"></div>
<div class="a" style="left:0px;top:156.8px;width:1190.5px;height:1.1px;background:#c7c7c7"></div>
<div class="a" style="left:0px;top:157.9px;width:32px;height:19.7px;background:#f8f9fa"></div>
<div class="a" style="left:32px;top:157.9px;width:4.7px;height:24.5px;background:#c8c8c8"></div>
<div class="a" style="left:0px;top:177.6px;width:36.7px;height:4.8px;background:#c8c8c8"></div>
<div class="a" style="left:37px;top:157.9px;width:1140px;height:24.5px;background:#d3e3fd"></div>
<div class="a" style="left:145px;top:157.9px;width:1px;height:24.5px;background:#c4c7c5"></div>
<div class="a" style="left:263px;top:157.9px;width:1px;height:24.5px;background:#c4c7c5"></div>
<div class="a" style="left:381px;top:157.9px;width:1px;height:24.5px;background:#c4c7c5"></div>
<div class="a" style="left:500px;top:157.9px;width:1px;height:24.5px;background:#c4c7c5"></div>
<div class="a" style="left:639px;top:157.9px;width:1px;height:24.5px;background:#c4c7c5"></div>
<div class="a" style="left:760px;top:157.9px;width:1px;height:24.5px;background:#c4c7c5"></div>
<div class="a" style="left:881px;top:157.9px;width:1px;height:24.5px;background:#c4c7c5"></div>
<div class="a" style="left:1002px;top:157.9px;width:1px;height:24.5px;background:#c4c7c5"></div>
<div class="a" style="left:1135px;top:157.9px;width:1px;height:24.5px;background:#c4c7c5"></div>
<div class="t" style="left:-209px;width:600px;text-align:center;top:165.2px;font-size:10.5px;color:#041e49;font-weight:bold">A</div>
<div class="t" style="left:-96px;width:600px;text-align:center;top:165.2px;font-size:10.5px;color:#041e49;font-weight:bold">B</div>
<div class="t" style="left:22px;width:600px;text-align:center;top:165.2px;font-size:10.5px;color:#041e49;font-weight:bold">C</div>
<div class="t" style="left:140.5px;width:600px;text-align:center;top:165.2px;font-size:10.5px;color:#041e49;font-weight:bold">D</div>
<div class="t" style="left:270px;width:600px;text-align:center;top:165.2px;font-size:10.5px;color:#041e49;font-weight:bold">E</div>
<div class="t" style="left:400px;width:600px;text-align:center;top:165.2px;font-size:10.5px;color:#041e49;font-weight:bold">F</div>
<div class="t" style="left:521px;width:600px;text-align:center;top:165.2px;font-size:10.5px;color:#041e49;font-weight:bold">G</div>
<div class="t" style="left:641.5px;width:600px;text-align:center;top:165.2px;font-size:10.5px;color:#041e49;font-weight:bold">H</div>
<div class="t" style="left:769px;width:600px;text-align:center;top:165.2px;font-size:10.5px;color:#041e49;font-weight:bold">I</div>
<div class="t" style="left:896px;width:600px;text-align:center;top:165.2px;font-size:10.5px;color:#041e49;font-weight:bold">J</div>
<div class="a" style="left:755.2px;top:162.5px;width:3px;height:14.5px;border-radius:1.5px;background:#3c3c3c"></div>
<div class="a" style="left:762.5px;top:162.5px;width:3px;height:14.5px;border-radius:1.5px;background:#3c3c3c"></div>
</div>
<div class="a" style="left:1177px;top:157.9px;width:13.5px;height:862.1px;background:#fff"></div>
<div class="a" style="left:1177px;top:157.9px;width:13.5px;height:24.5px;background:#f8f9fa"></div>
<div class="a" style="left:1177px;top:182.4px;width:13.5px;height:0.6px;background:#e0e0e0"></div>
<div class="a" style="left:1179px;top:185px;width:10px;height:31px;border-radius:5px;background:#dadce0"></div>
<div class="a" style="left:1177px;top:985px;width:13.5px;height:1px;background:#e8e8e8"></div>
<svg style="left:1180px;top:990px" width="8" height="5" viewBox="0 0 8 5"><path d="M0 5L4 0.5 8 5z" fill="#b0b0b0"/></svg>
<svg style="left:1180px;top:1009px" width="8" height="5" viewBox="0 0 8 5"><path d="M0 0L4 4.5 8 0z" fill="#b0b0b0"/></svg>
<div class="a" style="left:0;top:0;width:1177px;height:1020px;overflow:hidden">
<div class="a" style="left:530px;top:407px;width:477.4px;height:285.6px;background:#fff;"></div>
<div class="a" style="left:1006.8px;top:407px;width:1px;height:286px;background:#9e9e9e;"></div>
<div class="a" style="left:530px;top:692px;width:477.8px;height:1px;background:#9e9e9e;"></div>
<div class="t" style="left:582.6px;top:420.06px;font-size:21px;color:#757575;">- STAGE</div>
<div class="a" style="left:560px;top:457.8px;width:432.4px;height:1px;background:#e0e0e0;"></div>
<div class="a" style="left:560px;top:500.3px;width:432.4px;height:1px;background:#e0e0e0;"></div>
<div class="a" style="left:560px;top:542px;width:432.4px;height:1px;background:#e0e0e0;"></div>
<div class="a" style="left:560px;top:584.1px;width:432.4px;height:1px;background:#e0e0e0;"></div>
<div class="a" style="left:611.3px;top:543.7px;width:61.8px;height:83.5px;background:#4285f4;border-radius:2px 2px 0 0"></div>
<div class="a" style="left:707px;top:459px;width:61.8px;height:168.2px;background:#4285f4;border-radius:2px 2px 0 0"></div>
<div class="a" style="left:801.5px;top:606.7px;width:62.2px;height:20.5px;background:#4285f4;border-radius:2px 2px 0 0"></div>
<div class="a" style="left:897.6px;top:564.6px;width:61.8px;height:62.6px;background:#4285f4;border-radius:2px 2px 0 0"></div>
<div class="a" style="left:560px;top:626.7px;width:432.4px;height:1.1px;background:#333;"></div>
<div class="t" style="left:341.7px;width:600px;text-align:center;top:632.87px;font-size:12.5px;color:#222;">Stage 2</div>
<div class="t" style="left:436.5px;width:600px;text-align:center;top:632.87px;font-size:12.5px;color:#222;">Stage 1</div>
<div class="t" style="left:532.4px;width:600px;text-align:center;top:632.87px;font-size:12.5px;color:#222;">Stage 4</div>
<div class="t" style="left:628px;width:600px;text-align:center;top:632.87px;font-size:12.5px;color:#222;">Stage 3</div>
<div class="t" style="left:484.6px;width:600px;text-align:center;top:663.87px;font-size:12.5px;color:#222;">TASK PER STAGE</div>
<div class="a" style="left:1034.2px;top:407px;width:142.8px;height:285.6px;background:#fff;"></div>
<div class="a" style="left:1034.2px;top:407px;width:1px;height:286px;background:#9e9e9e;"></div>
<div class="a" style="left:1034.2px;top:692px;width:142.8px;height:1px;background:#9e9e9e;"></div>
<div class="t" style="left:1050px;top:420.76px;font-size:21px;color:#757575;">Q1 - STATUS</div>
<div class="a" style="left:1158px;top:449px;width:232px;height:232px;border-radius:50%;background:#fbbc04"></div>
<div class="a" style="left:1050px;top:564.8px;width:113.8px;height:1px;background:#9e9e9e;"></div>
<div class="a" style="left:1161.8px;top:563.3px;width:4px;height:4px;border-radius:50%;background:#9e9e9e"></div>
<div class="t" style="left:1050px;top:549.87px;font-size:12.5px;color:#222;">In Progress</div>
<div class="t" style="left:1050px;top:566.57px;font-size:12.5px;color:#9e9e9e;">50.0%</div>
<div class="a" style="left:40px;top:407px;width:480px;height:285px;background:#fff;"></div>
<div class="t" style="left:55px;top:420.66px;font-size:21px;color:#757575;">Q1 - TEAM</div>
<div class="a" style="left:82px;top:458px;width:423px;height:1px;background:#e0e0e0;"></div>
<div class="a" style="left:82px;top:500.1px;width:423px;height:1px;background:#e0e0e0;"></div>
<div class="a" style="left:82px;top:542.2px;width:423px;height:1px;background:#e0e0e0;"></div>
<div class="a" style="left:82px;top:584.3px;width:423px;height:1px;background:#e0e0e0;"></div>
<div class="t" style="left:-524.7px;width:600px;text-align:right;top:452.47px;font-size:12.5px;color:#222;">4</div>
<div class="t" style="left:-524.7px;width:600px;text-align:right;top:494.57px;font-size:12.5px;color:#222;">3</div>
<div class="t" style="left:-524.7px;width:600px;text-align:right;top:536.67px;font-size:12.5px;color:#222;">2</div>
<div class="t" style="left:-524.7px;width:600px;text-align:right;top:578.77px;font-size:12.5px;color:#222;">1</div>
<div class="t" style="left:-524.7px;width:600px;text-align:right;top:620.87px;font-size:12.5px;color:#222;">0</div>
<div class="a" style="left:104.8px;top:501.6px;width:40.2px;height:125.3px;background:#4285f4;border-radius:2px 2px 0 0"></div>
<div class="a" style="left:168.9px;top:501.6px;width:40.2px;height:125.3px;background:#4285f4;border-radius:2px 2px 0 0"></div>
<div class="a" style="left:233px;top:501.6px;width:40.2px;height:125.3px;background:#4285f4;border-radius:2px 2px 0 0"></div>
<div class="a" style="left:297px;top:501.6px;width:40.2px;height:125.3px;background:#4285f4;border-radius:2px 2px 0 0"></div>
<div class="a" style="left:361px;top:501.6px;width:40.2px;height:125.3px;background:#4285f4;border-radius:2px 2px 0 0"></div>
<div class="a" style="left:82px;top:626.4px;width:423px;height:1.1px;background:#333;"></div>
<div class="t" style="left:-175px;width:600px;text-align:center;top:632.87px;font-size:12.5px;color:#222;">Marketing</div>
<div class="t" style="left:-111px;width:600px;text-align:center;top:632.87px;font-size:12.5px;color:#222;">Sales</div>
<div class="a" style="left:39.5px;top:407px;width:1.5px;height:285px;background:#1a73e8;"></div>
<div class="a" style="left:39.5px;top:407px;width:520.5px;height:1.6px;background:#1a73e8;"></div>
<div class="a" style="left:39.5px;top:690.5px;width:520.5px;height:1.5px;background:#1a73e8;"></div>
<div class="a" style="left:37.3px;top:403.5px;width:7.5px;height:8px;background:#1a73e8;border:1px solid #fff"></div>
<div class="a" style="left:37.3px;top:546px;width:7.5px;height:8px;background:#1a73e8;border:1px solid #fff"></div>
<div class="a" style="left:37.3px;top:687.5px;width:7.5px;height:8px;background:#1a73e8;border:1px solid #fff"></div>
</div>
<div class="a" style="left:200px;top:59.5px;width:376px;height:751px;background:#fff;border-radius:0 5px 5px 5px;box-shadow:0 1px 2px rgba(60,64,67,0.3),0 2px 6px 2px rgba(60,64,67,0.15)"></div>
<div class="t" style="left:245.5px;top:77.94px;font-size:16.3px;color:#1f1f1f;letter-spacing:0.15px">Cells</div>
<svg style="left:548.5px;top:80.4px" width="9" height="11" viewBox="0 0 9 11"><path d="M0.5 0.8L8.5 5.5 0.5 10.2z" fill="#757575"/></svg>
<div class="t" style="left:245.5px;top:115.24px;font-size:16.3px;color:#1f1f1f;letter-spacing:0.15px">Rows</div>
<svg style="left:548.5px;top:117.7px" width="9" height="11" viewBox="0 0 9 11"><path d="M0.5 0.8L8.5 5.5 0.5 10.2z" fill="#757575"/></svg>
<div class="t" style="left:245.5px;top:152.44px;font-size:16.3px;color:#1f1f1f;letter-spacing:0.15px">Columns</div>
<svg style="left:548.5px;top:154.9px" width="9" height="11" viewBox="0 0 9 11"><path d="M0.5 0.8L8.5 5.5 0.5 10.2z" fill="#757575"/></svg>
<div class="t" style="left:245.5px;top:189.74px;font-size:16.3px;color:#1f1f1f;letter-spacing:0.15px">Sheet</div>
<div class="t" style="left:-44px;width:600px;text-align:right;top:189.74px;font-size:16.3px;color:#757575;letter-spacing:0.1px">Shift+F11</div>
<div class="t" style="left:245.5px;top:247.34px;font-size:16.3px;color:#1f1f1f;letter-spacing:0.15px">Tables</div>
<div class="t" style="left:245.5px;top:304.54px;font-size:16.3px;color:#1f1f1f;letter-spacing:0.15px">Chart</div>
<div class="t" style="left:245.5px;top:341.84px;font-size:16.3px;color:#1f1f1f;letter-spacing:0.15px">Pivot table</div>
<div class="t" style="left:245.5px;top:379.94px;font-size:16.3px;color:#1f1f1f;letter-spacing:0.15px">Image</div>
<svg style="left:548.5px;top:382.4px" width="9" height="11" viewBox="0 0 9 11"><path d="M0.5 0.8L8.5 5.5 0.5 10.2z" fill="#757575"/></svg>
<div class="t" style="left:245.5px;top:417.14px;font-size:16.3px;color:#1f1f1f;letter-spacing:0.15px">Drawing</div>
<div class="t" style="left:245.5px;top:474.54px;font-size:16.3px;color:#1f1f1f;letter-spacing:0.15px">Function</div>
<svg style="left:548.5px;top:477px" width="9" height="11" viewBox="0 0 9 11"><path d="M0.5 0.8L8.5 5.5 0.5 10.2z" fill="#757575"/></svg>
<div class="t" style="left:245.5px;top:511.84px;font-size:16.3px;color:#1f1f1f;letter-spacing:0.15px">Link</div>
<div class="t" style="left:-44px;width:600px;text-align:right;top:511.84px;font-size:16.3px;color:#757575;letter-spacing:0.1px">&#8984;K</div>
<div class="t" style="left:245.5px;top:569.14px;font-size:16.3px;color:#1f1f1f;letter-spacing:0.15px">Checkbox</div>
<div class="t" style="left:245.5px;top:606.34px;font-size:16.3px;color:#1f1f1f;letter-spacing:0.15px">Dropdown</div>
<div class="t" style="left:245.5px;top:643.64px;font-size:16.3px;color:#1f1f1f;letter-spacing:0.15px">Emoji</div>
<div class="t" style="left:245.5px;top:680.94px;font-size:16.3px;color:#1f1f1f;letter-spacing:0.15px">Smart chips</div>
<svg style="left:548.5px;top:683.4px" width="9" height="11" viewBox="0 0 9 11"><path d="M0.5 0.8L8.5 5.5 0.5 10.2z" fill="#757575"/></svg>
<div class="t" style="left:245.5px;top:738.54px;font-size:16.3px;color:#1f1f1f;letter-spacing:0.15px">Comment</div>
<div class="t" style="left:-44px;width:600px;text-align:right;top:738.54px;font-size:16.3px;color:#757575;letter-spacing:0.1px">&#8984;+Option+M</div>
<div class="t" style="left:245.5px;top:775.84px;font-size:16.3px;color:#1f1f1f;letter-spacing:0.15px">Note</div>
<div class="t" style="left:-44px;width:600px;text-align:right;top:775.84px;font-size:16.3px;color:#757575;letter-spacing:0.1px">Shift+F2</div>
<div class="a" style="left:200px;top:226.8px;width:376px;height:1px;background:#dadce0"></div>
<div class="a" style="left:200px;top:284px;width:376px;height:1px;background:#dadce0"></div>
<div class="a" style="left:200px;top:454px;width:376px;height:1px;background:#dadce0"></div>
<div class="a" style="left:200px;top:548.1px;width:376px;height:1px;background:#dadce0"></div>
<div class="a" style="left:200px;top:717.9px;width:376px;height:1px;background:#dadce0"></div>
<svg style="left:0;top:0" width="1600" height="1020" viewBox="0 0 1600 1020"><rect x="218.3" y="79" width="14.2" height="14" rx="1.2" fill="none" stroke="#444746" stroke-width="1.6"/><rect x="218.3" y="116.5" width="14.2" height="14.2" rx="1.2" fill="none" stroke="#444746" stroke-width="1.6"/><path d="M218.3 121.3h14.2M218.3 126h14.2" stroke="#444746" stroke-width="1.5"/><rect x="218.3" y="154" width="14.2" height="14" rx="1.2" fill="none" stroke="#444746" stroke-width="1.6"/><path d="M223 154v14M227.8 154v14" stroke="#444746" stroke-width="1.5"/><rect x="217.6" y="193" width="16.3" height="11" rx="1.2" fill="none" stroke="#444746" stroke-width="1.6"/><rect x="227" y="192.2" width="7.7" height="4.6" fill="#444746"/><rect x="218.5" y="248.6" width="14.2" height="14.2" rx="1.2" fill="none" stroke="#444746" stroke-width="1.6"/><path d="M218.5 252.4h14.2M223.2 252.4v10.4M228 252.4v10.4" stroke="#444746" stroke-width="1.5"/><rect x="218.5" y="305.5" width="14.2" height="14.5" rx="1.2" fill="none" stroke="#444746" stroke-width="1.6"/><path d="M222 316.5v-4.5M225.5 316.5v-7M229 316.5v-2" stroke="#444746" stroke-width="1.6"/><rect x="221.5" y="342" width="12" height="4.2" rx="0.8" fill="#444746"/><rect x="217.7" y="342" width="3" height="4.2" rx="0.6" fill="#444746"/><rect x="217.7" y="348" width="3.4" height="10.6" rx="0.8" fill="#444746"/><path d="M224 356.5a6 6 0 0 0 7-6" fill="none" stroke="#444746" stroke-width="1.4"/><path d="M229.4 351.5l1.7-2.3 1.9 2.2M225.5 354.6l-1.9 1.9 2.3 1.6" fill="none" stroke="#444746" stroke-width="1.3"/><rect x="218.5" y="380.4" width="14.2" height="14.7" rx="1.2" fill="none" stroke="#444746" stroke-width="1.6"/><path d="M221 391.6l2.8-3 2 2 1.8-2.5 3 3.5z" fill="#444746"/><rect x="218.5" y="418.3" width="14.2" height="14.2" rx="1.2" fill="none" stroke="#444746" stroke-width="1.6"/><circle cx="223.6" cy="423.3" r="2.6" fill="#444746"/><rect x="226" y="425.7" width="4.6" height="4.6" fill="#444746"/><path d="M230.5 477.5H221.8L226.3 483.2 221.8 489H230.9" fill="none" stroke="#444746" stroke-width="1.9" stroke-linejoin="miter"/><path d="M223.5 516.3h-2.4a4 4 0 0 0 0 8h2.4M228.5 516.3h2.4a4 4 0 0 1 0 8h-2.4M222.5 520.3h7" fill="none" stroke="#444746" stroke-width="1.6"/><rect x="218.3" y="570.5" width="14.6" height="14" rx="1.2" fill="none" stroke="#444746" stroke-width="1.6"/><path d="M221.8 577.8l2.4 2.4 5-5" fill="none" stroke="#444746" stroke-width="1.5"/><rect x="215.7" y="608.2" width="19.6" height="12.6" rx="6.3" fill="none" stroke="#444746" stroke-width="1.6"/><path d="M222.5 613.3h6l-3 3z" fill="#444746"/><circle cx="225.6" cy="652.9" r="8.3" fill="none" stroke="#444746" stroke-width="1.6"/><circle cx="222.7" cy="650.5" r="1.2" fill="#444746"/><circle cx="228.5" cy="650.5" r="1.2" fill="#444746"/><path d="M221.8 654.6a4 4 0 0 0 7.6 0z" fill="#444746"/><rect x="215.9" y="683.4" width="15.4" height="7" rx="3.5" fill="none" stroke="#444746" stroke-width="1.5"/><rect x="220.4" y="688.6" width="15.2" height="7.2" rx="3.6" fill="#fff" stroke="#444746" stroke-width="1.5"/><circle cx="219.6" cy="686.9" r="1.1" fill="#444746"/><path d="M226.3 691h4.2l-2.1 2.1z" fill="#444746"/><path d="M217.7 755V739.5Q217.7 738.3 218.9 738.3H233Q234.2 738.3 234.2 739.5V750.6Q234.2 751.8 233 751.8H220.9z" fill="none" stroke="#444746" stroke-width="1.6" stroke-linejoin="round"/><path d="M225.8 741.2v7.5M222 745h7.6" stroke="#444746" stroke-width="1.5"/><path d="M229.4 791.2H219.4Q218.3 791.2 218.3 790.1V778.3Q218.3 777.2 219.4 777.2H231.3Q232.4 777.2 232.4 778.3V788.2z" fill="none" stroke="#444746" stroke-width="1.6" stroke-linejoin="round"/><path d="M232.4 788.2h-2.2q-0.8 0-0.8 0.8v2.2z" fill="#444746"/><path d="M221.3 781.3h8.2M221.3 785h4.5" stroke="#444746" stroke-width="1.5"/></svg>
<div class="a" style="left:1209.2px;top:67.7px;width:374.8px;height:1000px;background:#fff;border-radius:15px 15px 0 0"></div>
<svg style="left:1230px;top:89px" width="25" height="23" viewBox="0 0 25 23"><rect x="2" y="1.8" width="20.5" height="19.2" rx="0.8" fill="none" stroke="#188038" stroke-width="2.2"/><path d="M7.5 17V10.8M12.2 17V7M17 17V13.8" stroke="#188038" stroke-width="2.3"/></svg>
<div class="t" style="left:1270.8px;top:90.74px;font-size:19.6px;color:#1f1f1f;-webkit-text-stroke:0.3px #1f1f1f;letter-spacing:0.25px">Chart editor</div>
<svg style="left:1545px;top:95px" width="14" height="14" viewBox="0 0 14 14"><path d="M1.3 1.3L12.7 12.7M12.7 1.3L1.3 12.7" stroke="#1f1f1f" stroke-width="1.9"/></svg>
<div class="a" style="left:1209.2px;top:133px;width:374.8px;height:1px;background:#e1e3e1"></div>
<div class="t" style="left:1270.8px;top:153.13px;font-size:17.4px;color:#146c2e;-webkit-text-stroke:0.35px #146c2e;letter-spacing:0.1px">Setup</div>
<div class="a" style="left:1261px;top:177.4px;width:66.2px;height:3.2px;border-radius:3px 3px 0 0;background:#146c2e"></div>
<div class="t" style="left:1439.2px;top:153.13px;font-size:17.4px;color:#444746;-webkit-text-stroke:0.35px #444746;letter-spacing:0.1px">Customize</div>
<div class="t" style="left:1228.5px;top:206.85px;font-size:14.2px;color:#5f6368;letter-spacing:0.1px">Chart type</div>
<div class="a" style="left:1228.4px;top:233px;width:336.3px;height:47.8px;border:1px solid #dadce0;border-radius:5px"></div>
<svg style="left:1239px;top:247px" width="22" height="19" viewBox="0 0 22 19"><path d="M0.5 18H21" stroke="#5f6368" stroke-width="1.5"/><path d="M5.2 18V10.5M10.5 18V1M15.8 18V6" stroke="#5f6368" stroke-width="1.5"/></svg>
<div class="t" style="left:1272px;top:248.45px;font-size:16.5px;color:#1f1f1f;letter-spacing:0px">Column chart</div>
<svg style="left:1539px;top:254px" width="10" height="6" viewBox="0 0 10 6"><path d="M0 0h9.8L4.9 5z" fill="#444746"/></svg>
<div class="t" style="left:1228.5px;top:306.85px;font-size:14.2px;color:#5f6368;letter-spacing:0.1px">Stacking</div>
<div class="a" style="left:1228.4px;top:332.7px;width:336.3px;height:47.8px;border:1px solid #dadce0;border-radius:5px"></div>
<div class="t" style="left:1239.4px;top:347.82px;font-size:16.7px;color:#1f1f1f;letter-spacing:0px">None</div>
<svg style="left:1538px;top:353.5px" width="10" height="6" viewBox="0 0 10 6"><path d="M0 0h9.8L4.9 5z" fill="#444746"/></svg>
<div class="t" style="left:1228.5px;top:405.65px;font-size:14.2px;color:#5f6368;letter-spacing:0.1px">Data range</div>
<div class="t" style="left:1228.5px;top:442.26px;font-size:15.6px;color:#1f1f1f;letter-spacing:-0.5px">E26:E41</div>
<svg style="left:1535px;top:442.5px" width="20" height="16" viewBox="0 0 20 16"><rect x="1" y="1" width="18" height="14" fill="none" stroke="#5f6368" stroke-width="2"/><path d="M10 1v14M1 8h18" stroke="#5f6368" stroke-width="2"/></svg>
<div class="a" style="left:1228.4px;top:469px;width:336.3px;height:1px;background:#dadce0"></div>
<div class="t" style="left:1228.5px;top:497.01px;font-size:16px;color:#1f1f1f;-webkit-text-stroke:0.4px #1f1f1f;letter-spacing:0.5px">X-axis</div>
<div class="a" style="left:1228.4px;top:525.8px;width:336.6px;height:41.7px;border-radius:21px;background:#f1f3f4"></div>
<svg style="left:1247px;top:540px" width="19" height="15" viewBox="0 0 19 15"><path d="M1 2h9.5M5.7 2v12.2" stroke="#5f6368" stroke-width="2.3"/><path d="M10 6.8h8M14 6.8v7.4" stroke="#5f6368" stroke-width="2"/></svg>
<div class="t" style="left:1286px;top:538.76px;font-size:15.6px;color:#1f1f1f;letter-spacing:-0.5px">E26:E41</div>
<svg style="left:1535px;top:536.5px" width="6" height="19" viewBox="0 0 6 19"><circle cx="3" cy="2.3" r="2.1" fill="#5f6368"/><circle cx="3" cy="9.5" r="2.1" fill="#5f6368"/><circle cx="3" cy="16.7" r="2.1" fill="#5f6368"/></svg>
<div class="a" style="left:1229.6px;top:590.8px;width:20.8px;height:20.3px;border-radius:2.5px;background:#188038"></div>
<svg style="left:1229.6px;top:590.8px" width="21" height="20" viewBox="0 0 21 20"><path d="M3.6 10.4l4.6 4.4 9-9.2" fill="none" stroke="#fff" stroke-width="2.8"/></svg>
<div class="t" style="left:1266.4px;top:593.07px;font-size:16.3px;color:#3c4043;letter-spacing:0.1px">Aggregate</div>
<div class="t" style="left:1228.5px;top:650.71px;font-size:16px;color:#1f1f1f;-webkit-text-stroke:0.4px #1f1f1f;letter-spacing:0.5px">Series</div>
<div class="a" style="left:1228.4px;top:680.5px;width:336.6px;height:41.7px;border-radius:21px;border:1px solid #dadce0"></div>
<div class="t" style="left:1248.7px;top:693.57px;font-size:16.3px;color:#444746;-webkit-text-stroke:0.25px #444746;letter-spacing:0.1px">Add Series</div>
<div class="a" style="left:1229.3px;top:751.7px;width:21px;height:20.6px;border:2.2px solid #5f6368;border-radius:2.5px"></div>
<div class="t" style="left:1266px;top:754.09px;font-size:16.2px;color:#3c4043;letter-spacing:0.15px">Switch rows / columns</div>
<div class="a" style="left:1229.3px;top:786.7px;width:21px;height:20.6px;border:2.2px solid #5f6368;border-radius:2.5px"></div>
<div class="t" style="left:1266px;top:789.09px;font-size:16.2px;color:#3c4043;letter-spacing:0.15px">Use row 26 as headers</div>
</body></html>
